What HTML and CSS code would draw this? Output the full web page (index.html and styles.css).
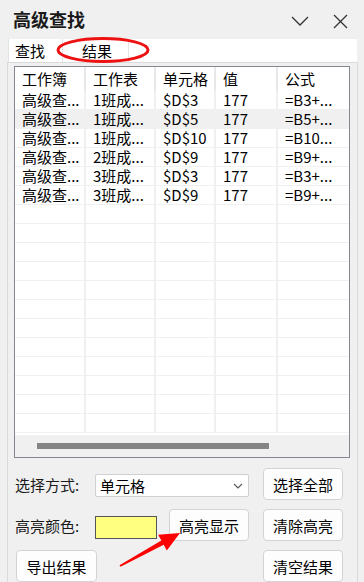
FILE: index.html
```html
<!DOCTYPE html>
<html lang="zh-CN">

<head>
    <meta charset="UTF-8" />
    <meta name="viewport" content="width=device-width, initial-scale=1.0" />
    <title>高级查找</title>
    <link rel="stylesheet" href="styles.css">
</head>

<body>
    <div class="pane">
        <header class="titlebar">
            <h1>高级查找</h1>
            <div class="win-btns">
                <svg width="18" height="10" viewBox="0 0 18 10"><polyline points="1,1 9,9 17,1" /></svg>
                <svg width="15" height="15" viewBox="0 0 15 15"><line x1="1" y1="1" x2="14" y2="14" /><line x1="14" y1="1" x2="1" y2="14" /></svg>
            </div>
        </header>

        <div class="tabs">
            <div class="tab">查找</div>
            <div class="tab active">结果</div>
        </div>

        <div class="tab-page">
            <!-- results list -->
            <div class="listview">
                <div class="lv-row lv-head">
                    <span>工作簿</span><span>工作表</span><span>单元格</span><span>值</span><span>公式</span>
                </div>
                <div class="lv-body">
                    <div class="lv-row"><span>高级查...</span><span>1班成...</span><span>$D$3</span><span>177</span><span>=B3+...</span></div>
                    <div class="lv-row selected"><span>高级查...</span><span>1班成...</span><span>$D$5</span><span>177</span><span>=B5+...</span></div>
                    <div class="lv-row"><span>高级查...</span><span>1班成...</span><span>$D$10</span><span>177</span><span>=B10...</span></div>
                    <div class="lv-row"><span>高级查...</span><span>2班成...</span><span>$D$9</span><span>177</span><span>=B9+...</span></div>
                    <div class="lv-row"><span>高级查...</span><span>3班成...</span><span>$D$3</span><span>177</span><span>=B3+...</span></div>
                    <div class="lv-row"><span>高级查...</span><span>3班成...</span><span>$D$9</span><span>177</span><span>=B9+...</span></div>
                    <div class="lv-row"><span></span><span></span><span></span><span></span><span></span></div>
                    <div class="lv-row"><span></span><span></span><span></span><span></span><span></span></div>
                    <div class="lv-row"><span></span><span></span><span></span><span></span><span></span></div>
                    <div class="lv-row"><span></span><span></span><span></span><span></span><span></span></div>
                    <div class="lv-row"><span></span><span></span><span></span><span></span><span></span></div>
                    <div class="lv-row"><span></span><span></span><span></span><span></span><span></span></div>
                    <div class="lv-row"><span></span><span></span><span></span><span></span><span></span></div>
                    <div class="lv-row"><span></span><span></span><span></span><span></span><span></span></div>
                    <div class="lv-row"><span></span><span></span><span></span><span></span><span></span></div>
                    <div class="lv-row"><span></span><span></span><span></span><span></span><span></span></div>
                    <div class="lv-row"><span></span><span></span><span></span><span></span><span></span></div>
                    <div class="lv-row"><span></span><span></span><span></span><span></span><span></span></div>
                </div>
                <div class="hscroll"><div class="thumb"></div></div>
            </div>

            <!-- options -->
            <div class="controls">
                <label class="lbl">选择方式:</label>
                <div class="select">
                    <span>单元格</span>
                    <svg width="10" height="6" viewBox="0 0 10 6"><polyline points="1,1 5,5 9,1" /></svg>
                </div>
                <button class="btn col-right">选择全部</button>

                <label class="lbl">高亮颜色:</label>
                <div class="color-row">
                    <div class="swatch"></div>
                    <button class="btn">高亮显示</button>
                </div>
                <button class="btn col-right">清除高亮</button>

                <button class="btn export">导出结果</button>
                <button class="btn col-right">清空结果</button>
            </div>
        </div>

        <!-- red markup drawn over the screenshot -->
        <svg class="markup" width="364" height="582" viewBox="0 0 364 582">
            <ellipse cx="103" cy="50" rx="45" ry="11.5" />
            <polygon points="119.5,565.2 161.3,540.4 158.2,534.7 180,533 166.8,550.5 163.7,544.8 120.5,566.8" />
        </svg>
    </div>
</body>

</html>
```

FILE: styles.css
```css
:root {
    --bg: #f0f0f0;
    --line: #f0f0f0;
    --border: #d4d4d4;
    --list-border: #828790;
    --text: #000;
    --red: #ee1111;
}

* {
    box-sizing: border-box;
    margin: 0;
    padding: 0;
}

body {
    font-family: "Noto Sans CJK SC", "Noto Sans", sans-serif;
    font-size: 15px;
    color: var(--text);
    background: var(--bg);
    width: 364px;
    height: 582px;
    overflow: hidden;
}

.pane {
    position: relative;
    height: 582px;
}

/* Title bar */
.titlebar {
    height: 39px;
    display: flex;
    align-items: center;
    justify-content: space-between;
}

.titlebar h1 {
    font-size: 18px;
    font-weight: bold;
    line-height: 39px;
    padding-left: 13px;
    color: #1a1a1a;
}

.win-btns {
    display: flex;
    align-items: center;
    gap: 24px;
    padding-right: 16px;
    padding-top: 3px;
}

.win-btns svg {
    fill: none;
    stroke: #333;
    stroke-width: 1.3;
}

/* Tabs */
.tabs {
    display: flex;
    height: 23px;
    margin: 0 7px 0 8px;
    background: #fff;
}

.tab {
    line-height: 23px;
    padding: 0 6px;
    width: 54px;
    border-left: 1px solid #e3e3e3;
}

.tab.active {
    width: 67px;
    padding-left: 19px;
    border-right: 1px solid #e3e3e3;
}

/* Tab page */
.tab-page {
    margin: 0 6px 0 7px;
    border: 1px solid #dadada;
    border-bottom: none;
    padding: 3px 6px 0;
    height: 520px;
}

/* List view */
.listview {
    width: 336px;
    height: 392px;
    border: 1px solid var(--list-border);
    background: #fff;
}

.lv-row {
    display: grid;
    grid-template-columns: 71px 70px 60px 62px 1fr;
    height: 19px;
    border-bottom: 1px solid var(--line);
    line-height: 18px;
}

.lv-row span {
    padding-left: 7px;
    border-right: 2px solid var(--line);
    white-space: nowrap;
}

.lv-row span:last-child {
    border-right: none;
}

.lv-head {
    height: 24px;
    line-height: 24px;
    border-bottom: none;
}

.lv-head span {
    border-right-color: #e8e8e8;
}

.lv-row.selected {
    background: #f0f0f0;
}

.lv-body {
    height: 344px;
}

.hscroll {
    height: 22px;
    background: var(--bg);
    padding: 8px 0 0 22px;
}

.hscroll .thumb {
    width: 232px;
    height: 6px;
    background: #858585;
}

/* Options */
.controls {
    display: grid;
    grid-template-columns: 81px 154px 14px 80px;
    grid-template-rows: 32px 32px 32px;
    row-gap: 9px;
    margin-top: 10px;
    align-items: center;
}

.lbl {
    padding-left: 1px;
    color: #1a1a1a;
}

.select {
    height: 23px;
    margin-top: 3px;
    background: #fff;
    border: 1px solid #d0d0d0;
    border-radius: 2px;
    display: flex;
    align-items: center;
    justify-content: space-between;
    padding: 0 5px 0 4px;
}

.select svg {
    fill: none;
    stroke: #555;
    stroke-width: 1.1;
}

.btn {
    font-family: inherit;
    font-size: 15px;
    color: var(--text);
    width: 80px;
    height: 32px;
    background: #fdfdfd;
    border: 1px solid #d3d3d3;
    border-radius: 4px;
}

.col-right {
    grid-column: 4;
}

.color-row {
    display: flex;
    align-items: center;
    gap: 12px;
    height: 32px;
}

.swatch {
    width: 62px;
    height: 23px;
    margin-top: 4px;
    background: #ffff80;
    border: 1px solid #555;
}

.export {
    grid-column: 1 / 3;
    justify-self: start;
    width: 81px;
    margin-left: 2px;
}

/* Annotation overlay */
.markup {
    position: absolute;
    left: 0;
    top: 0;
    pointer-events: none;
}

.markup ellipse {
    fill: none;
    stroke: var(--red);
    stroke-width: 3;
}

.markup polygon {
    fill: #ff0000;
}
```
